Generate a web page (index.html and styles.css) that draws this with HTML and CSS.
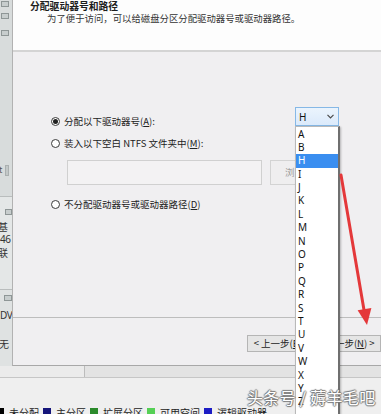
FILE: index.html
```html
<!DOCTYPE html>
<html lang="zh-CN">
<head>
<meta charset="utf-8">
<title>分配驱动器号和路径</title>
<link rel="stylesheet" href="styles.css">
</head>
<body>
<div class="screen">
  <div class="top">
    <div class="strip">
      <div class="sec s1">
        <span class="ico i1"></span>
        <span class="ico i2"></span>
        <span class="ico i3"></span>
        <div class="sbar"><span class="t">t</span><span class="box"></span></div>
      </div>
      <div class="sec s2">
        <span class="ico i4"></span>
        <span class="ch ji">基</span>
        <span class="ch num">46</span>
        <span class="ch">联</span>
      </div>
      <div class="sec s3">
        <span class="ico i5"></span>
        <span class="ch num dv">DV</span>
        <span class="ch wu">无</span>
      </div>
    </div>
    <div class="dialog">
      <div class="head">
        <div class="title">分配驱动器号和路径</div>
        <div class="sub">为了便于访问，可以给磁盘分区分配驱动器号或驱动器路径。</div>
      </div>
      <div class="body">
        <div class="opt first">
          <div class="lab"><span class="radio on"></span><span>分配以下驱动器号(<u>A</u>):</span></div>
          <div class="combo">
            <span>H</span>
            <svg class="chev" width="7" height="5" viewBox="0 0 7 5"><polyline points="0.5,0.8 3.5,3.8 6.5,0.8" fill="none" stroke="#4a4a4a" stroke-width="1.2"/></svg>
            <div class="list">
              <div class="item">A</div>
              <div class="item">B</div>
              <div class="item sel">H</div>
              <div class="item">I</div>
              <div class="item">J</div>
              <div class="item">K</div>
              <div class="item">L</div>
              <div class="item">M</div>
              <div class="item">N</div>
              <div class="item">O</div>
              <div class="item">P</div>
              <div class="item">Q</div>
              <div class="item">R</div>
              <div class="item">S</div>
              <div class="item">T</div>
              <div class="item">U</div>
              <div class="item">V</div>
              <div class="item">W</div>
              <div class="item">X</div>
              <div class="item">Y</div>
              <div class="item">Z</div>
            </div>
          </div>
        </div>
        <div class="opt second">
          <div class="lab"><span class="radio"></span><span>装入以下空白 NTFS 文件夹中(<u>M</u>):</span></div>
        </div>
        <div class="pathrow">
          <div class="textbox"></div>
          <div class="browse">浏览(R)...</div>
        </div>
        <div class="opt third">
          <div class="lab"><span class="radio"></span><span>不分配驱动器号或驱动器路径(<u>D</u>)</span></div>
        </div>
      </div>
      <div class="foot">
        <div class="btn">&lt; 上一步(<u>B</u>)</div>
        <div class="btn">下一步(<u>N</u>) &gt;</div>
      </div>
    </div>
  </div>
  <div class="bottom">
    <div class="scroll"><div class="sl"></div></div>
    <div class="legend">
      <span class="sq k"></span><span class="lt">未分配</span>
      <span class="sq n"></span><span class="lt">主分区</span>
      <span class="sq g"></span><span class="lt">扩展分区</span>
      <span class="sq lg"></span><span class="lt">可用空间</span>
      <span class="sq b"></span><span class="lt">逻辑驱动器</span>
    </div>
  </div>
</div>
<svg class="arrow" width="381" height="414" viewBox="0 0 381 414">
  <line x1="341" y1="175" x2="364" y2="310" stroke="#e4383a" stroke-width="3" stroke-linecap="round"/>
  <polygon points="367,325 357.6,310.3 371.4,308.1" fill="#e4383a"/>
</svg>
<div class="watermark">头条号 / 薅羊毛吧</div>
</body>
</html>
```
FILE: styles.css
```css
* { box-sizing: border-box; margin: 0; padding: 0; }
html, body { width: 381px; height: 414px; overflow: hidden; }
body {
  position: relative;
  font-family: "Noto Sans CJK SC", "Noto Sans", sans-serif;
  background: #efefef;
  color: #222;
}
.screen { display: flex; flex-direction: column; height: 414px; }
.top { display: flex; height: 366px; flex: none; }

/* left strip of underlying window */
.strip { width: 12px; flex: none; display: flex; flex-direction: column; overflow: hidden; background: #d8dcdc; }
.sec { display: flex; flex-direction: column; }
.s1 { height: 196px; padding-top: 1px; }
.s2 { height: 93px; border-top: 1px solid #b9bdbd; background: #e4e7e7; padding-top: 12px; }
.s3 { flex: 1; border-top: 1px solid #b9bdbd; background: #dfe2e2; padding-top: 5px; }
.ico { display: block; width: 8px; height: 6px; margin-left: 1px; border: 1px solid #8e9696; background: #c7cdcd; }
.i2 { margin-top: 6px; }
.i3 { margin-top: 11px; }
.i4 { margin-left: 5px; width: 7px; }
.i5 { margin-left: 4px; }
.sbar { display: flex; align-items: center; margin-top: 128px; height: 12px; }
.t { font-size: 9px; line-height: 12px; color: #555; margin-left: -1px; }
.box { width: 4px; height: 11px; margin-left: 3px; background: #c3c8c8; border: 1px solid #aab0b0; }
.ch { font-size: 10px; line-height: 13px; color: #333; margin-left: -2px; }
.ji { margin-top: 5px; }
.num { font-family: "Noto Sans", sans-serif; margin-left: 0; letter-spacing: -0.5px; }
.dv { margin-top: 8px; }
.wu { margin-left: -1px; margin-top: 15px; }

/* dialog */
.dialog {
  flex: 1;
  display: flex;
  flex-direction: column;
  border-left: 1px solid #b2b2b2;
  border-bottom: 1px solid #a8a8a8;
  background: #f0eff1;
}
.head { height: 52px; flex: none; background: #fdfdfd; border-bottom: 2px solid #d4d4d4; padding-left: 17px; }
.title { font-size: 9.8px; font-weight: bold; line-height: 12px; color: #1e1e1e; }
.sub { font-size: 9.4px; line-height: 12px; padding-left: 17px; color: #333; }

.body { flex: 1; padding: 55px 42px 0 38px; font-size: 9.5px; color: #222; }
.opt { display: flex; align-items: flex-start; line-height: 14px; }
.lab { display: flex; align-items: center; height: 14px; }
.first .lab { margin-top: 7px; }
.second { margin-top: 8px; }
.third { margin-top: 12px; }
.radio {
  width: 9px; height: 9px; margin-right: 4px;
  border: 1px solid #3c3c3c; border-radius: 50%; background: #fff;
  display: flex; align-items: center; justify-content: center;
}
.radio.on::after { content: ""; width: 5px; height: 5px; border-radius: 50%; background: #1f1f1f; }
u { text-decoration: underline; text-underline-offset: 1px; }

.pathrow { display: flex; gap: 8px; margin: 10px 0 0 16px; }
.textbox { width: 195px; height: 25px; border: 1px solid #d0d0d0; background: #f3f2f3; }
.browse {
  width: 66px; height: 25px; border: 1px solid #d3d3d3; background: #efeeef;
  color: #9c9c9c; line-height: 23px; padding-left: 14px; white-space: nowrap; overflow: hidden;
}

/* combo + dropdown */
.combo {
  margin-left: auto; position: relative; width: 44px; height: 19px;
  border: 1px solid #86b8e6;
  background: linear-gradient(#ebf4fd, #dbeafb);
  display: flex; align-items: center; justify-content: space-between;
  padding: 0 4px 0 3px;
  font-family: "Noto Sans", sans-serif; font-size: 10px; color: #111;
  z-index: 5;
}
.chev { display: block; }
.list {
  position: absolute; top: 18px; left: -1px; width: 45px; height: 300px;
  background: #fff;
  border: 1px solid #b9b9b9; border-right: 2px solid #6f6f6f;
  padding-top: 0.5px;
  box-shadow: 1px 1px 2px rgba(0,0,0,0.25);
}
.item { height: 13.4px; line-height: 13.4px; padding-left: 2px; font-size: 10px; color: #111; }
.item.sel { background: #3a8ef0; color: #fff; }

/* footer */
.foot {
  height: 48px; flex: none; border-top: 1px solid #bdbdbd;
  display: flex; justify-content: flex-end; align-items: flex-start;
  gap: 10px; padding: 17px 0 0 0;
}
.btn {
  width: 62px; height: 17px; border: 1px solid #b5b5b5; background: #e5e5e5;
  font-size: 9.5px; line-height: 15px; text-align: center; color: #222; white-space: nowrap;
}

/* below dialog */
.bottom { flex: 1; display: flex; flex-direction: column; }
.scroll { height: 12px; flex: none; display: flex; background: #e3e3e3; border-bottom: 1px solid #c6c6c6; }
.sl { width: 85px; border-right: 1px solid #bcbcbc; background: #ebebeb; }
.legend { flex: 1; display: flex; align-items: flex-start; padding-top: 29px; font-size: 10px; line-height: 12px; color: #222; }
.sq { width: 8px; height: 8px; flex: none; margin-top: 1px; margin-right: 5px; }
.sq.k { background: #000; margin-left: -4px; }
.sq.n { background: #15157a; }
.sq.g { background: #2b8a2b; }
.sq.lg { background: #55d055; }
.sq.b { background: #1c1cc4; }
.lt { margin-right: 4px; white-space: nowrap; }

/* overlays */
.arrow { position: absolute; left: 0; top: 0; pointer-events: none; z-index: 8; }
.watermark {
  position: absolute; left: 247px; top: 387px; z-index: 9;
  font-size: 16px; line-height: 20px; color: #fff; letter-spacing: 0.3px; white-space: nowrap;
  text-shadow: 1px 0 1px #777, -1px 0 1px #777, 0 1px 1px #777, 0 -1px 1px #777;
}
```
